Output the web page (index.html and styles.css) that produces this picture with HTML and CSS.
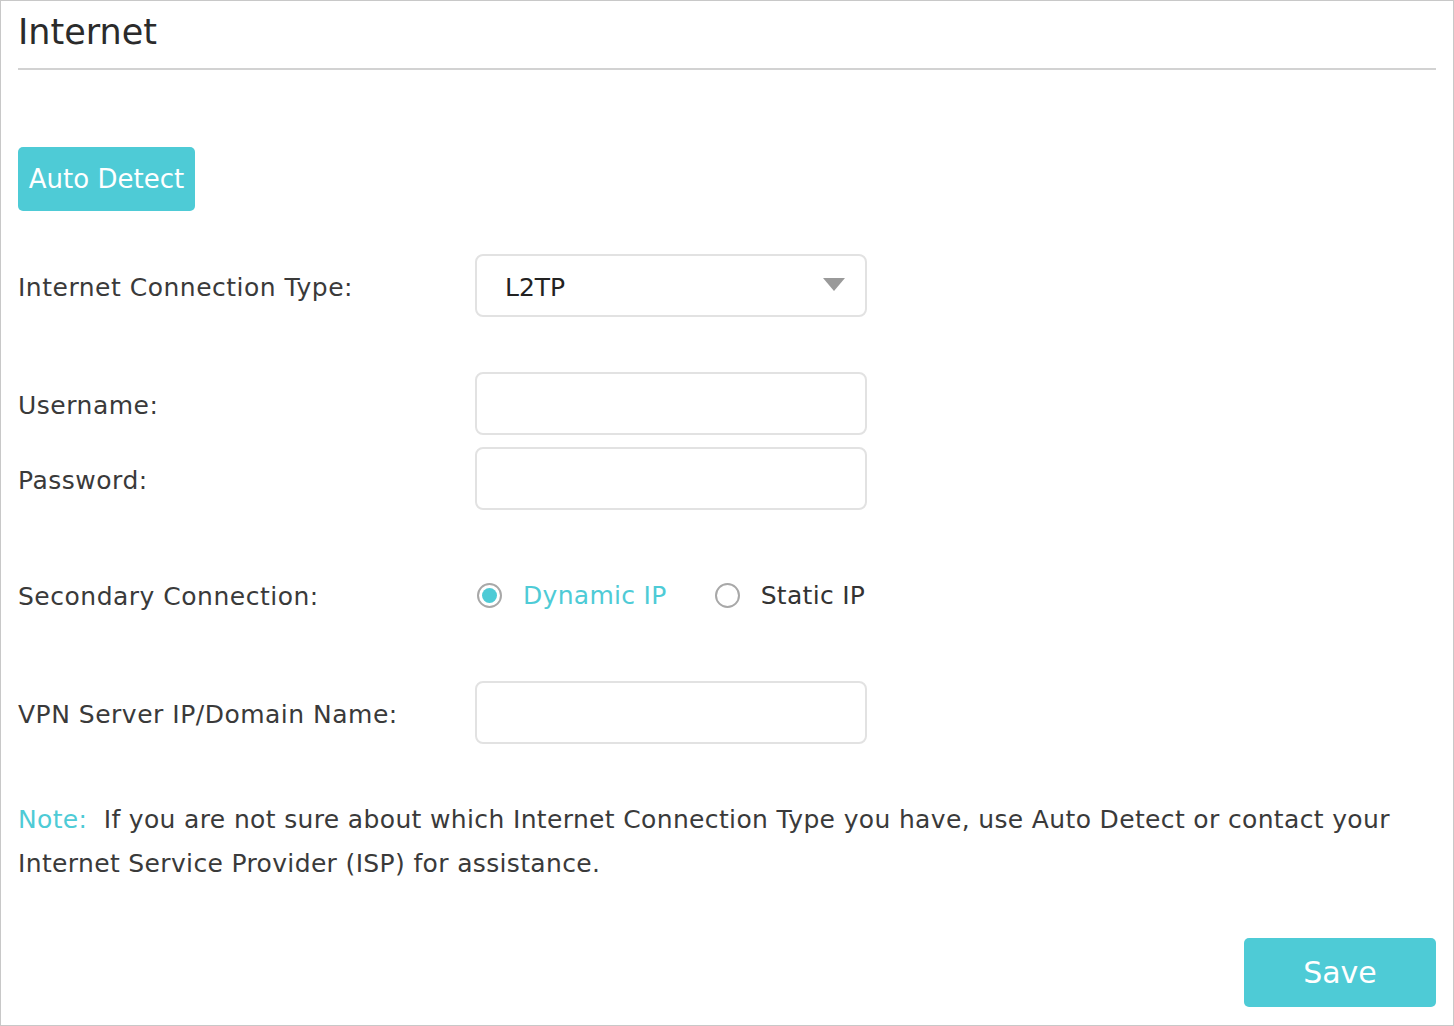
FILE: index.html
```html
<!DOCTYPE html>
<html>
<head>
<meta charset="utf-8">
<link rel="stylesheet" href="styles.css">
</head>
<body>
<div class="panel">
  <h1 class="title">Internet</h1>
  <div class="detect-row"><button class="btn btn-detect">Auto Detect</button></div>
  <div class="row row-type">
    <label class="label">Internet Connection Type:</label>
    <div class="select"><span class="select-value">L2TP</span><span class="arrow"></span></div>
  </div>
  <div class="row row-user">
    <label class="label">Username:</label>
    <div class="input"></div>
  </div>
  <div class="row row-pass">
    <label class="label">Password:</label>
    <div class="input"></div>
  </div>
  <div class="row row-secondary">
    <label class="label">Secondary Connection:</label>
    <div class="radios">
      <span class="radio checked"><span class="dot"></span></span><span class="radio-text active">Dynamic IP</span>
      <span class="radio"></span><span class="radio-text">Static IP</span>
    </div>
  </div>
  <div class="row row-vpn">
    <label class="label">VPN Server IP/Domain Name:</label>
    <div class="input"></div>
  </div>
  <p class="note"><span class="note-key">Note:</span> If you are not sure about which Internet Connection Type you have, use Auto Detect or contact your Internet Service Provider (ISP) for assistance.</p>
  <div class="actions"><button class="btn btn-save">Save</button></div>
</div>
</body>
</html>
```
FILE: styles.css
```css
html, body { margin: 0; padding: 0; background: #fff; }
.panel {
  box-sizing: border-box;
  width: 1454px;
  height: 1026px;
  border: 1px solid #c8c8c8;
  padding: 0 17px;
  font-family: "DejaVu Sans", sans-serif;
  color: #333;
}
.title {
  margin: 0;
  font-weight: normal;
  font-size: 35px;
  line-height: 35px;
  padding: 14px 0 18px 0;
  border-bottom: 2px solid #d2d2d2;
  color: #2b2b2b;
}
.detect-row { margin-top: 77px; display: flex; }
.btn {
  border: none;
  background: #4ecbd6;
  color: #fff;
  font-family: inherit;
  border-radius: 5px;
  padding: 0;
  cursor: pointer;
}
.btn-detect { width: 177px; height: 64px; font-size: 26px; }
.row { display: flex; align-items: center; height: 63px; }
.label { width: 457px; flex: none; font-size: 25px; letter-spacing: 0.5px; padding-top: 3px; box-sizing: border-box; color: #3a3a3a; }
.row-type { margin-top: 43px; }
.row-user { margin-top: 55px; }
.row-pass { margin-top: 12px; }
.row-secondary { margin-top: 53px; }
.row-vpn { margin-top: 55px; }
.select, .input {
  box-sizing: border-box;
  width: 392px;
  height: 63px;
  border: 2px solid #e2e2e2;
  border-radius: 8px;
  background: #fff;
}
.select { display: flex; align-items: center; justify-content: space-between; padding: 3px 20px 0 28px; }
.select-value { font-size: 25px; color: #222; }
.arrow {
  width: 0; height: 0;
  border-left: 11px solid transparent;
  border-right: 11px solid transparent;
  border-top: 13px solid #9a9a9a;
  margin-top: -5px;
}
.radios { display: flex; align-items: center; padding-top: 2px; }
.radio {
  box-sizing: border-box;
  width: 25px; height: 25px;
  border: 2px solid #a8a8a8;
  border-radius: 50%;
  margin-left: 2px;
  display: flex; align-items: center; justify-content: center;
}
.radio .dot { width: 15px; height: 15px; border-radius: 50%; background: #4ecbd6; }
.radio-text { font-size: 25px; letter-spacing: 0.3px; margin-left: 21px; margin-right: 46px; color: #333; }
.radio-text.active { color: #4ecbd6; }
.note {
  margin: 54px 0 0 0;
  font-size: 25px;
  letter-spacing: 0.35px;
  line-height: 44px;
  color: #3a3a3a;
}
.note-key { color: #4ecbd6; margin-right: 8px; }
.actions { display: flex; justify-content: flex-end; margin-top: 52px; }
.btn-save { width: 192px; height: 69px; font-size: 30px; }
```
